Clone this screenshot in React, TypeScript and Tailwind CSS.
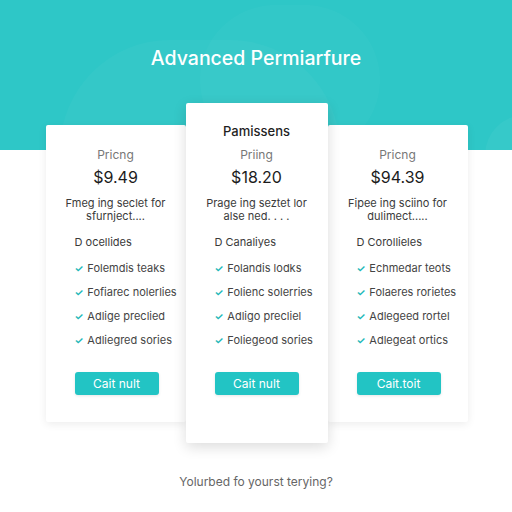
import React from 'react';

type Plan = {
  title?: string;
  label: string;
  price: string;
  desc: [string, string];
  head: string;
  features: string[];
  cta: string;
};

const plans: Plan[] = [
  {
    label: 'Pricng',
    price: '$9.49',
    desc: ['Fmeg ing seclet for', 'sfurnject....'],
    head: 'D ocellides',
    features: ['Folemdis teaks', 'Fofiarec nolerlies', 'Adlige preclied', 'Adliegred sories'],
    cta: 'Cait nult',
  },
  {
    title: 'Pamissens',
    label: 'Priing',
    price: '$18.20',
    desc: ['Prage ing seztet lor', 'alse ned. . . .'],
    head: 'D Canaliyes',
    features: ['Folandis lodks', 'Folienc solerries', 'Adligo precliel', 'Foliegeod sories'],
    cta: 'Cait nult',
  },
  {
    label: 'Pricng',
    price: '$94.39',
    desc: ['Fipee ing sciino for', 'dulimect.....'],
    head: 'D Corollieles',
    features: ['Echmedar teots', 'Folaeres rorietes', 'Adlegeed rortel', 'Adlegeat ortics'],
    cta: 'Cait.toit',
  },
];

function Card({ plan, featured }: { plan: Plan; featured?: boolean }) {
  return (
    <div
      className={
        featured
          ? 'relative z-10 w-[142px] bg-white rounded-[2px] pt-[19px] pb-[48px] px-[29px] shadow-[0_4px_14px_rgba(0,0,0,0.14)]'
          : 'w-[140px] mt-[22px] bg-white rounded-[2px] pt-[22px] pb-[27px] px-[29px] shadow-[0_2px_8px_rgba(0,0,0,0.08)]'
      }
    >
      {plan.title && (
        <div className="text-center text-[13px] leading-[18px] font-medium text-[#1f1f1f] mb-[7px]">{plan.title}</div>
      )}
      <div className="text-center text-[12px] leading-[16px] text-[#777]">{plan.label}</div>
      <div className="mt-[4px] text-center text-[16px] leading-[20px] text-[#1c1c1c]">{plan.price}</div>
      <div className="mt-[10px] text-center text-[11px] leading-[12.5px] text-[#3a3a3a] whitespace-nowrap -mx-[10px]">
        <div>{plan.desc[0]}</div>
        <div>{plan.desc[1]}</div>
      </div>
      <div className="mt-[12px] text-[11px] leading-[16px] text-[#3a3a3a]">{plan.head}</div>
      <ul className="mt-[10px] flex flex-col gap-[8px]">
        {plan.features.map((f, i) => (
          <li key={i} className="flex items-center gap-[4px] text-[11px] leading-[16px] text-[#444] whitespace-nowrap">
            <span className="text-[#20b8b8] text-[10px] font-bold">✓</span>
            {f}
          </li>
        ))}
      </ul>
      <button className="mt-[24px] w-[84px] h-[23px] rounded-[3px] bg-[#22c4c4] text-white text-[12px] shadow-[0_1px_3px_rgba(0,0,0,0.1)]">
        {plan.cta}
      </button>
    </div>
  );
}

export default function App() {
  return (
    <div
      className="relative w-[512px] h-[512px] overflow-hidden bg-[linear-gradient(to_bottom,#2ec7c7_0px,#2ec7c7_150px,#ffffff_150px)]"
      style={{ fontFamily: 'Inter, "Noto Sans", sans-serif' }}
    >
      <div className="pointer-events-none absolute left-[60px] top-[40px] w-[280px] h-[220px] rounded-full bg-white/[0.03]" />
      <div className="pointer-events-none absolute left-[200px] top-[5px] w-[180px] h-[150px] rounded-full bg-white/[0.025]" />
      <div className="pointer-events-none absolute left-[485px] top-[115px] w-[80px] h-[80px] rounded-full bg-white/[0.04]" />
      <div className="relative">
        <h1 className="pt-[46px] text-center text-[19.5px] leading-[24px] font-medium text-white">Advanced Permiarfure</h1>
        <div className="mt-[33px] flex items-start justify-center pl-[1px]">
          <Card plan={plans[0]} />
          <Card plan={plans[1]} featured />
          <Card plan={plans[2]} />
        </div>
        <p className="mt-[31px] text-center text-[12px] leading-[16px] text-[#666]">Yolurbed fo yourst terying?</p>
      </div>
    </div>
  );
}
